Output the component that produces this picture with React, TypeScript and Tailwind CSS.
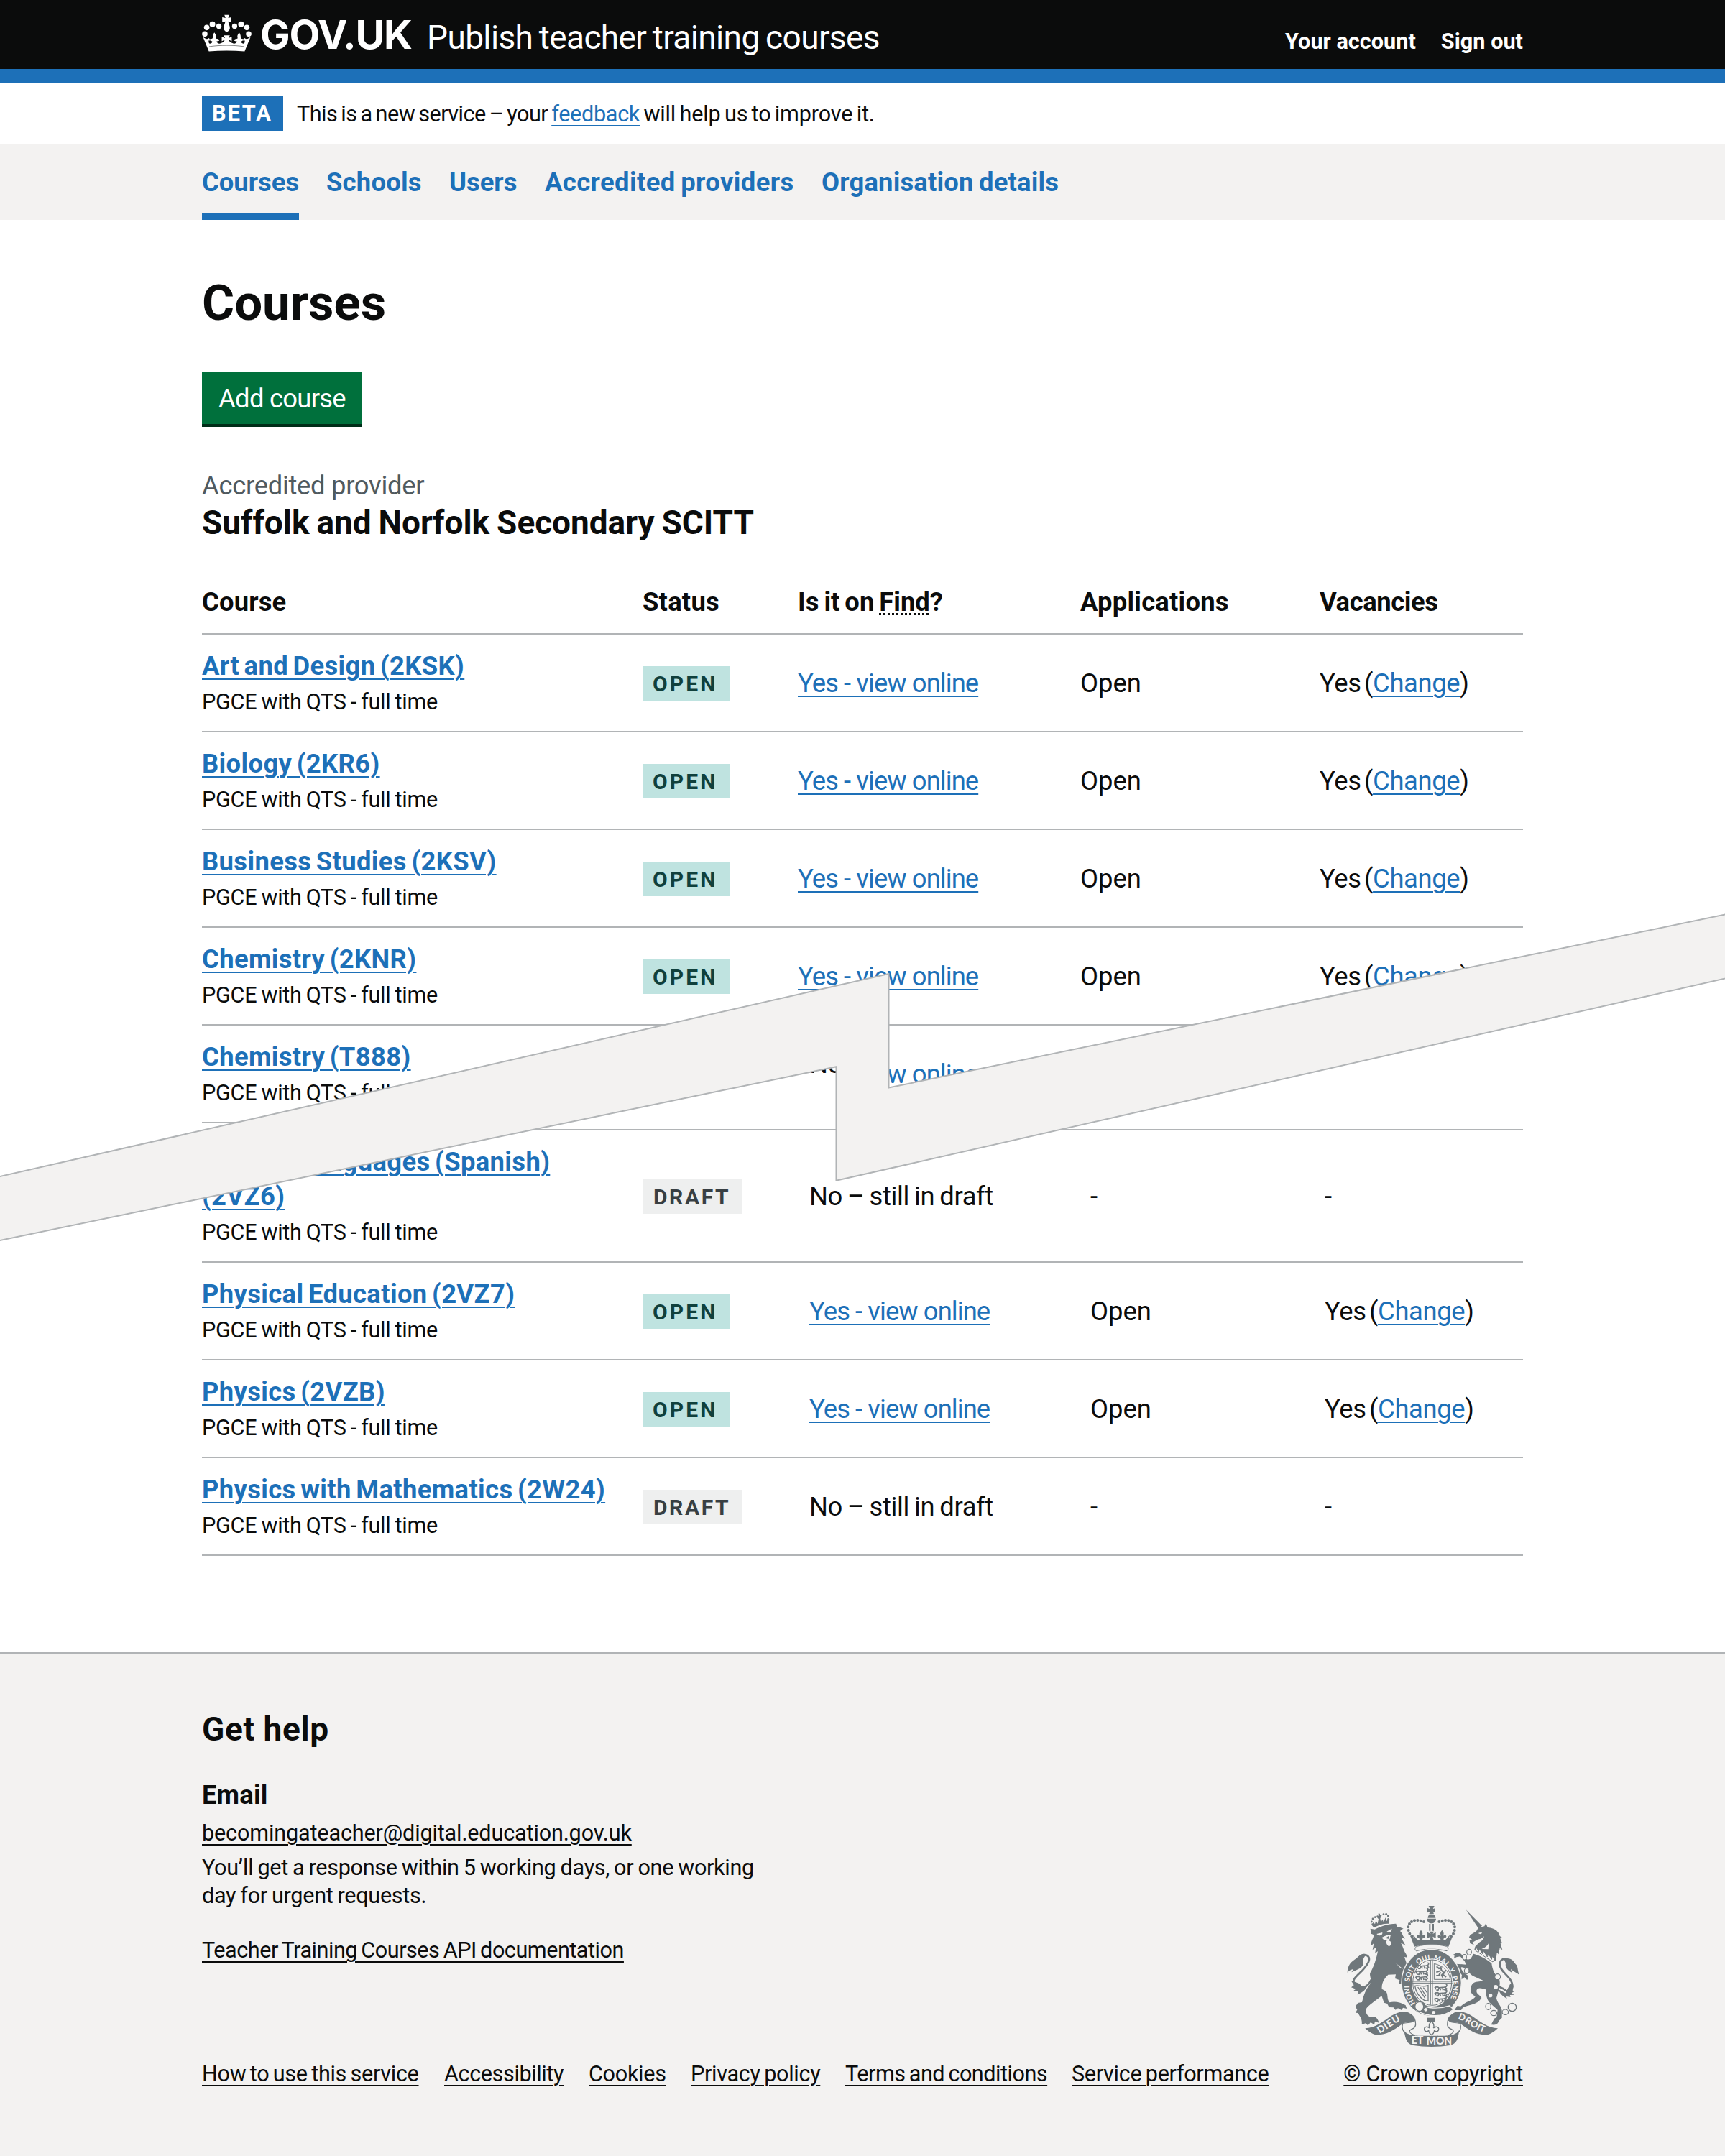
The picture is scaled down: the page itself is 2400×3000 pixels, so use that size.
import type { ReactNode } from "react";

const WRAP = "mx-auto w-[1838px]";
const UNDERLINE = "underline decoration-[2px] underline-offset-[5px]";
const LINK = "text-[#1d70b8] underline decoration-[2px] underline-offset-[5px]";

type Course = {
  title: string;
  status: "OPEN" | "DRAFT";
};

const upperCourses: Course[] = [
  { title: "Art and Design (2KSK)", status: "OPEN" },
  { title: "Biology (2KR6)", status: "OPEN" },
  { title: "Business Studies (2KSV)", status: "OPEN" },
  { title: "Chemistry (2KNR)", status: "OPEN" },
  { title: "Chemistry (T888)", status: "OPEN" },
];

const lowerCourses: Course[] = [
  { title: "Modern Languages (Spanish) (2VZ6)", status: "DRAFT" },
  { title: "Physical Education (2VZ7)", status: "OPEN" },
  { title: "Physics (2VZB)", status: "OPEN" },
  { title: "Physics with Mathematics (2W24)", status: "DRAFT" },
];

const UPPER_GRID = "grid grid-cols-[613px_216px_393px_333px_1fr]";
const LOWER_GRID = "grid grid-cols-[613px_232px_391px_326px_1fr]";

function Crown() {
  const beads: [number, number, number][] = [
    [44, 110, 11.5], [52, 83, 11.5], [76, 69, 12], [103, 77, 11],
    [228, 110, 11.5], [220, 83, 11.5], [196, 69, 12], [169, 77, 11],
  ];
  return (
    <svg className="h-[52px] w-[69px]" viewBox="32 28 208 156" fill="#fff">
      {beads.map(([x, y, r]) => (
        <circle key={`${x}-${y}`} cx={x} cy={y} r={r} />
      ))}
      <path d="M126 30H147L142 43L155 40V61L142 57C143 66 149 75 149 84C149 94 142 98 136 103C130 98 123 94 123 84C123 75 129 66 130 57L117 61V40L131 43Z" />
      <path d="M36 122C45 130 53 134 61 127L64 130C62 137 57 140 63 150C69 151 74 148 76 142L68 137C65 139 62 138 61 134C65 130 71 132 77 128C78 119 76 116 84 104C92 115 92 120 90 128C96 132 102 129 105 136C103 140 99 141 94 140C94 149 105 153 112 148C124 144 126 140 127 134L115 141V122L129 127L123 116H149L143 127L157 122V141L145 134C146 140 148 144 160 148C167 153 178 149 178 140C173 141 169 140 167 136C170 129 176 132 182 128C180 120 180 115 188 104C196 116 194 119 195 128C201 132 207 130 211 134C210 138 207 139 204 137L196 142C198 148 203 151 209 150C215 140 210 137 208 130L211 127C219 134 227 130 236 122L211 183C162 179 110 179 61 183Z" />
      <path d="M62 163C110 156 162 156 210 163" stroke="#0b0c0c" strokeWidth="1.5" fill="none" />
    </svg>
  );
}

function SmallFleur({ x, y }: { x: number; y: number }) {
  return (
    <g transform={`translate(${x} ${y})`}>
      <path d="M0-24C9-14 8-7 4 0C10-5 17-5 18 2C18 8 12 10 8 6L6 16H-6L-8 6C-12 10-18 8-18 2C-17-5-10-5-4 0C-8-7-9-14 0-24Z" />
    </g>
  );
}

function ShieldLion({ x, y }: { x: number; y: number }) {
  return (
    <path
      transform={`translate(${x} ${y})`}
      d="M0 4C5-2 9 2 13 0L20 4C29 1 36 3 44 0C53-1 53-9 47-11M44 2L51 8L45 14L38 10M33 5L35 14M18 5L15 14L7 13M22 6L25 14M3 4L5 11"
      fill="none"
      stroke="#6f777b"
      strokeWidth="5"
      strokeLinejoin="round"
    />
  );
}

function Crest() {
  const leftBeads: [number, number][] = [
    [372, 190], [362, 179], [357, 165], [356, 151], [361, 138], [370, 129], [382, 124], [395, 123], [408, 125], [421, 129],
  ];
  const lionCrown: [number, number][] = [
    [207, 140], [203, 129], [208, 117], [218, 110], [228, 107], [240, 103], [253, 98], [264, 97], [272, 105], [273, 118],
  ];
  return (
    <svg className="h-[198px] w-[241px]" viewBox="100 60 723 594" fill="#6f777b">
      {/* lion */}
      <g>
        {lionCrown.map(([x, y]) => (
          <circle key={x} cx={x} cy={y} r="4.2" />
        ))}
        <path d="M205 145L210 130L217 139L221 124L228 137L232 118L225 110L234 103L230 95H238L238 106L245 104L239 115L242 132L248 119L253 130L261 112L265 126L275 118L275 137C252 136 232 142 213 154Z" />
        <path d="M198 158L216 161C240 148 270 138 305 137L309 150C322 150 326 156 336 157L322 168C333 178 332 190 343 200L326 195L345 229L324 216C336 235 337 251 347 264L352 278L340 276L348 300L368 310L350 380L366 404L345 398L348 410L330 405L334 392L316 387L320 373L301 366L304 349L272 350C256 366 244 384 246 410L260 418C275 430 264 450 278 466C300 460 326 466 345 478L350 492L334 488L328 498L313 490L303 497L294 487L276 486L268 471L255 467L245 438C220 460 188 476 178 497C180 516 190 529 207 526C224 526 229 536 234 551L217 545L214 559L199 549L188 562L178 553L162 558C165 530 151 524 147 510L136 509L143 496L135 484L146 468L163 465C171 430 180 410 199 386C203 359 189 351 201 336C219 300 224 275 229 252L217 262L222 236L207 246L213 218L202 229C199 207 211 202 212 184L201 179Z" />
        <g fill="#f3f2f1">
          <path d="M224 180L248 174C250 186 235 192 224 180ZM266 170L287 158C289 170 280 176 266 170Z" />
          <path d="M246 195C258 188 272 182 285 183C278 190 284 199 274 207C289 212 291 225 276 232C264 224 262 214 267 206C255 207 250 202 246 195Z" />
          <path d="M304 302L335 327L320 319Z" />
        </g>
        <path d="M274 189L261 197L276 201Z" />
        <path d="M202 371C181 414 158 404 135 391C116 375 137 359 163 334C188 306 204 282 184 270C168 263 157 272 146 282" fill="none" stroke="#6f777b" strokeWidth="8" />
        <path d="M181 266C157 256 149 280 128 290C112 301 103 316 102 341C111 331 119 329 127 327L119 340C138 331 157 326 166 311C172 294 160 287 181 266Z" />
        <path d="M127 378L117 374L129 394L118 403L137 410L128 416L147 421L144 433C160 427 177 415 184 399L163 401L153 388Z" />
      </g>
      {/* unicorn */}
      <g>
        <path d="M597 79L664 146L649 157Z" />
        <path d="M649 154L674 148L680 135L687 153C721 155 735 174 738 189L747 194L740 199L748 219L741 220L749 247L738 239L733 265L726 258L722 292L711 292C685 267 660 253 632 246L635 233L648 220C656 210 671 210 672 190C660 205 644 201 639 207L623 216L631 226L614 219L612 207L622 203L610 195C611 181 633 176 641 167Z" />
        <path d="M648 177C656 173 664 173 664 177L656 181ZM693 205C696 223 680 237 662 243L690 244Z" fill="#f3f2f1" />
        <path d="M636 249L709 297L717 284L706 274L704 286L691 263L686 276L671 251L667 264L653 242L650 254L641 237Z" fill="#f3f2f1" stroke="#6f777b" strokeWidth="3" />
        <path d="M629 263C655 270 686 286 704 303C708 332 716 349 733 362C744 386 735 408 730 426L724 448C728 471 744 479 747 500V530L734 543C730 560 716 560 702 559L715 533L725 528L729 497L703 474C681 456 682 434 679 412C660 406 645 403 641 416C640 433 655 432 662 447C642 478 607 475 584 487L577 498H549L561 480L575 482C595 461 628 458 637 440C611 430 611 403 626 386C644 376 661 380 670 376C645 362 616 356 610 340C599 333 597 320 579 319C570 319 586 340 592 344L606 355L607 371L597 370L591 361L576 371L580 351C570 344 569 325 552 317L554 305L598 308L590 292L573 274L557 277L547 283L549 271L543 267L560 258L571 258L588 276L604 287L616 284Z" />
        <path d="M735 407C714 391 744 402 770 420C792 413 796 398 785 376C771 350 738 334 738 307C739 285 759 278 773 291" fill="none" stroke="#6f777b" strokeWidth="8" />
        <path d="M755 284C784 276 794 292 804 306C816 316 810 331 820 351C806 339 794 337 784 326L788 341C762 328 761 311 763 302Z" />
        <path d="M782 388L795 395C795 412 787 417 798 420L787 427L798 434L780 435L783 443L765 441L768 450C746 439 737 427 733 412L762 427Z" />
        <g fill="none" stroke="#6f777b" strokeWidth="3.5">
          <ellipse cx="610" cy="256" rx="10" ry="12" />
          <ellipse cx="591" cy="277" rx="8" ry="11" fill="#f3f2f1" />
          <ellipse cx="600" cy="334" rx="10" ry="12" fill="#f3f2f1" />
          <circle cx="729" cy="359" r="12" fill="#f3f2f1" />
          <ellipse cx="690" cy="483" rx="11" ry="13" />
          <ellipse cx="713" cy="510" rx="13" ry="11" />
          <ellipse cx="761" cy="506" rx="13" ry="11" />
          <circle cx="790" cy="486" r="17" strokeWidth="4" />
        </g>
        <circle cx="721" cy="402" r="9" fill="#f3f2f1" />
        <circle cx="699" cy="437" r="8" fill="#f3f2f1" />
      </g>
      {/* royal crown */}
      <g>
        {leftBeads.map(([x, y]) => (
          <g key={`${x}-${y}`}>
            <circle cx={x} cy={y} r="6" />
            <circle cx={906 - x} cy={y} r="6" />
          </g>
        ))}
        <path d="M441 63H465L459 76L469 72V91L459 86L463 97H443L447 86L436 91V72L447 76Z" />
        <path d="M438 113C438 102 444 98 453 98C462 98 470 102 470 113ZM434 116H472C471 129 463 136 453 136C443 136 435 129 434 116Z" />
        <path d="M443 138H449V167H443ZM457 138H463V167H457Z" />
        <path d="M436 173L450 180L444 170H464L458 180L471 173V198L458 191L461 204H445L449 191L436 198Z" />
        <SmallFleur x={409} y={188} />
        <SmallFleur x={497} y={188} />
        <path d="M364 187L380 195L376 183L393 203C418 212 436 202 453 203C470 202 488 212 513 203L530 183L526 195L542 187L524 233C481 220 428 220 382 233Z" />
        <path d="M392 232C430 222 478 222 516 232C526 236 523 247 517 251C477 241 430 241 389 251C382 247 383 235 392 232Z" fill="#f3f2f1" stroke="#6f777b" strokeWidth="3" />
      </g>
      {/* garter and shield */}
      <ellipse cx="453" cy="384" rx="125" ry="140" stroke="#f3f2f1" strokeWidth="4" />
      <ellipse cx="456" cy="383" rx="86" ry="100" fill="#f3f2f1" />
      <ellipse cx="456" cy="383" rx="81" ry="95" fill="none" stroke="#6f777b" strokeWidth="3" />
      <path d="M449 288V476M457 288V476M374 378H540M374 385H540" stroke="#6f777b" strokeWidth="3" />
      <ShieldLion x={390} y={311} />
      <ShieldLion x={386} y={335} />
      <ShieldLion x={386} y={358} />
      <ShieldLion x={466} y={401} />
      <ShieldLion x={466} y={425} />
      <ShieldLion x={464} y={449} />
      <path d="M464 304V370H531C528 346 513 316 464 304Z" fill="none" stroke="#6f777b" strokeWidth="3" />
      <path d="M474 316L484 324L492 319L494 331L506 343L499 348L514 360M489 334L473 340M491 340L484 353L473 354M494 349L500 362M507 343L512 330" fill="none" stroke="#6f777b" strokeWidth="6" />
      <path d="M384 397C400 392 416 405 439 395V460L423 457C404 445 388 426 384 397ZM396 402L426 448M407 403L430 440M419 404L434 424" fill="none" stroke="#6f777b" strokeWidth="4" />
      <defs>
        <path id="garter" d="M386 470A92 108 0 1 1 524 463" />
        <path id="dieu" d="M236 596C268 580 300 550 338 536" />
        <path id="droit" d="M562 535C600 546 635 582 678 592" />
      </defs>
      <text fill="#f3f2f1" fontFamily="Lato, sans-serif" fontSize="29" fontWeight="900" wordSpacing="6" textLength="450">
        <textPath href="#garter">HONI SOIT QUI MAL Y PENSE</textPath>
      </text>
      <path d="M390 468C412 484 465 500 528 480L545 495C500 532 435 526 390 500Z" stroke="#f3f2f1" strokeWidth="4" />
      <circle cx="404" cy="483" r="20" fill="#f3f2f1" stroke="#6f777b" strokeWidth="4" />
      <path d="M412 466C424 478 424 491 410 502" fill="none" stroke="#6f777b" strokeWidth="5" />
      <circle cx="429" cy="496" r="7" fill="#f3f2f1" />
      <circle cx="462" cy="508" r="7" fill="#f3f2f1" />
      {/* motto ribbon */}
      <path d="M436 530H469V546H436Z" />
      <path d="M453 545C466 556 464 566 461 573C470 564 484 567 483 578C482 589 470 589 465 583C463 589 465 594 453 602C441 594 443 589 441 583C436 589 424 589 423 578C422 567 436 564 445 573C442 566 440 556 453 545Z" fill="#f3f2f1" stroke="#6f777b" strokeWidth="4" />
      <path d="M176 574C217 573 254 544 285 522C316 503 344 500 364 512C387 525 392 546 382 563C370 555 360 540 331 556C293 584 266 600 228 602C208 601 192 588 176 574Z" />
      <path d="M730 574C689 573 652 544 621 522C590 503 562 500 542 512C519 525 514 546 524 563C536 555 546 540 575 556C613 584 640 600 678 602C698 601 714 588 730 574Z" />
      <path d="M333 556C325 583 343 606 384 604C352 591 358 581 378 574C390 565 389 551 381 535C380 558 346 545 333 556ZM573 556C581 583 563 606 522 604C554 591 548 581 528 574C516 565 517 551 525 535C526 558 560 545 573 556Z" fill="#f3f2f1" stroke="#6f777b" strokeWidth="3.5" />
      <path d="M338 582C354 612 403 603 453 606C503 603 552 612 568 582C565 622 556 639 530 645C482 653 424 653 376 645C350 639 345 622 338 582Z" />
      <g fill="#f3f2f1" fontFamily="Lato, sans-serif" fontWeight="900">
        <text fontSize="40" textLength="104"><textPath href="#dieu">DIEU</textPath></text>
        <text fontSize="43" x="369" y="640" textLength="50" lengthAdjust="spacingAndGlyphs">ET</text>
        <text fontSize="43" x="432" y="642" textLength="106" lengthAdjust="spacingAndGlyphs">MON</text>
        <text fontSize="38" textLength="124"><textPath href="#droit">DROIT</textPath></text>
      </g>
    </svg>
  );
}

function Tag({ status }: { status: Course["status"] }) {
  return status === "OPEN" ? (
    <strong className="mt-[2px] flex h-[48px] w-[122px] items-center bg-[#bfe3e0] pt-[2px] pl-[14px] text-[30px] leading-none font-bold tracking-[3.1px] text-[#10403c]">
      OPEN
    </strong>
  ) : (
    <strong className="mt-[2px] flex h-[48px] w-[138px] items-center bg-[#eeefef] pt-[2px] pl-[15px] text-[30px] leading-none font-bold tracking-[2.6px] text-[#383f43]">
      DRAFT
    </strong>
  );
}

function Row({ course, grid }: { course: Course; grid: string }) {
  const open = course.status === "OPEN";
  return (
    <div className={`${grid} items-center border-b-2 border-[#b1b4b6] text-[36.4px] leading-[48px]`}>
      <div className="pt-[20px] pb-[21px]">
        <a className={`${LINK} block w-fit max-w-[580px] font-bold tracking-[0.01em] [word-spacing:-0.08em]`}>{course.title}</a>
        <p className="mt-[7px] text-[30.6px] leading-[38px] tracking-[-0.01em] [word-spacing:-0.033em]">PGCE with QTS - full time</p>
      </div>
      <Tag status={course.status} />
      <div className="pt-[2px]">
        {open ? (
          <a className={`${LINK} tracking-[-0.0255em]`}>Yes - view online</a>
        ) : (
          <span className="tracking-[-0.01em] [word-spacing:-0.045em]">No – still in draft</span>
        )}
      </div>
      <div className="pt-[2px]">{open ? "Open" : "-"}</div>
      <div className="pt-[2px] tracking-[-0.01em] [word-spacing:-0.12em]">
        {open ? (
          <>
            Yes (<a className={LINK}>Change</a>)
          </>
        ) : (
          "-"
        )}
      </div>
    </div>
  );
}

function NavItem({ children, width, active }: { children: ReactNode; width: string; active?: boolean }) {
  return (
    <div className={width}>
      <a className={`block h-[105px] w-fit pt-[29px] ${active ? "border-b-[9px] border-[#1d70b8]" : ""}`}>{children}</a>
    </div>
  );
}

export default function App() {
  return (
    <div className="relative h-[3000px] w-[2400px] overflow-hidden bg-white font-['Roboto',sans-serif] text-[#0b0c0c]">
      <header className="border-b-[19px] border-[#1d70b8] bg-[#0b0c0c] text-white">
        <div className={`${WRAP} flex h-[96px] items-start`}>
          <div className="mt-[20px]">
            <Crown />
          </div>
          <span className="mt-[18px] ml-[12px] w-[232px] font-['Inter',sans-serif] text-[55.5px] leading-[60px] font-bold tracking-[-0.02em]">GOV.UK</span>
          <span className="mt-[24px] text-[46px] leading-[57px] tracking-[-0.0135em] [word-spacing:-0.05em]">Publish teacher training courses</span>
          <nav className="mt-[39px] ml-auto flex gap-[35px] text-[30.6px] leading-[38px] font-bold">
            <a className="tracking-[0.001em]">Your account</a>
            <a className="tracking-[0.001em]">Sign out</a>
          </nav>
        </div>
      </header>

      <div className={`${WRAP} flex h-[86px] pt-[19px]`}>
        <strong className="flex h-[48px] w-[113px] items-center bg-[#1d70b8] pt-[1px] pl-[14px] text-[30.6px] leading-none font-bold tracking-[2.3px] text-white">BETA</strong>
        <p className="mt-[6px] ml-[19px] text-[30.6px] leading-[38px] tracking-[-0.005em] [word-spacing:-0.068em]">
          <span className="tracking-[-0.0167em]">This is a new service – your </span>
          <a className={`${LINK} tracking-[-0.01em]`}>feedback</a> will help us to improve it.
        </p>
      </div>

      <nav className="bg-[#f3f2f1] text-[36.4px] leading-[48px] font-bold text-[#1d70b8]">
        <div className={`${WRAP} flex`}>
          <NavItem width="w-[173px]" active>Courses</NavItem>
          <NavItem width="w-[171px] tracking-[0.006em]">Schools</NavItem>
          <NavItem width="w-[133px]">Users</NavItem>
          <NavItem width="w-[385px] tracking-[0.011em] [word-spacing:-0.05em]">Accredited providers</NavItem>
          <NavItem width="w-[360px] tracking-[0.005em] [word-spacing:-0.05em]">Organisation details</NavItem>
        </div>
      </nav>

      <main>
        <div className="[clip-path:polygon(0_0,2400px_0,2400px_1000px,1200px_1250px,1200px_1110px,0_1380px)]">
          <div className={`${WRAP} pt-[77px]`}>
            <h1 className="text-[69px] leading-[77px] font-bold">Courses</h1>
            <button className="mt-[57px] flex h-[77px] w-[223px] items-center justify-center border-b-4 border-[#002d18] bg-[#00703c] pt-[3px] text-[36.4px] leading-none tracking-[-0.02em] text-white">
              Add course
            </button>
            <p className="mt-[58px] text-[36.4px] leading-[48px] tracking-[-0.008em] text-[#505a5f]">Accredited provider</p>
            <h2 className="-mt-px text-[46px] leading-[57px] font-bold tracking-[-0.001em] [word-spacing:-0.03em]">Suffolk and Norfolk Secondary SCITT</h2>
            <div className={`${UPPER_GRID} mt-[38px] border-b-2 border-[#b1b4b6] pt-[20px] pb-[19px] text-[36.4px] leading-[48px] font-bold`}>
              <span className="tracking-[0.004em]">Course</span>
              <span className="tracking-[0.006em]">Status</span>
              <span className="[word-spacing:-0.055em]">
                Is it on <abbr className="underline decoration-dotted decoration-[3px] underline-offset-[3px] [text-decoration-skip-ink:none]">Find</abbr>?
              </span>
              <span className="tracking-[0.006em]">Applications</span>
              <span className="tracking-[-0.011em]">Vacancies</span>
            </div>
            {upperCourses.map((c) => (
              <Row key={c.title} course={c} grid={UPPER_GRID} />
            ))}
          </div>
        </div>

        <div className="-mt-[174px] [clip-path:polygon(0_290px,1200px_20px,1200px_180px,2400px_-70px,2400px_900px,0_900px)]">
          <div className={WRAP}>
            <div className={`${LOWER_GRID} h-[184px] items-center border-b-2 border-[#b1b4b6] text-[36.4px] leading-[48px]`}>
              <span className="col-start-3 pt-[2px] tracking-[-0.01em] [word-spacing:-0.045em]">No – still in draft</span>
            </div>
            {lowerCourses.map((c) => (
              <Row key={c.title} course={c} grid={LOWER_GRID} />
            ))}
          </div>
        </div>
      </main>

      <svg className="absolute top-0 left-0" width="2400" height="3000" viewBox="0 0 2400 3000">
        <path
          d="M-10 1639.3L1236.5 1355V1513.5L2410 1270.5V1359.2L1163.5 1642.8V1484.3L-10 1728Z"
          fill="#f3f2f1"
          stroke="#b1b4b6"
          strokeWidth="2"
        />
      </svg>

      <footer className="mt-[134px] h-[701px] border-t-2 border-[#b1b4b6] bg-[#f3f2f1]">
        <div className={`${WRAP} flex items-end justify-between pt-[77px] text-[30.6px] leading-[38px]`}>
          <div>
            <h2 className="text-[46px] leading-[57px] font-bold tracking-[0.013em]">Get help</h2>
            <h3 className="mt-[39px] text-[36.4px] leading-[48px] font-bold tracking-[0.004em]">Email</h3>
            <p className="mt-[10px] tracking-[-0.005em]">
              <a className={UNDERLINE}>becomingateacher@digital.education.gov.uk</a>
            </p>
            <p className="mt-[10px] w-[800px] leading-[38.5px] tracking-[-0.01em] [word-spacing:-0.038em]">
              You’ll get a response within 5 working days, or one working
              <br />
              day for urgent requests.
            </p>
            <p className="mt-[38px] tracking-[-0.0155em] [word-spacing:-0.06em]">
              <a className={UNDERLINE}>Teacher Training Courses API documentation</a>
            </p>
            <div className="mt-[134px] flex tracking-[-0.01em] [word-spacing:-0.06em]">
              <span className="w-[337px]"><a className={UNDERLINE}>How to use this service</a></span>
              <span className="w-[201px] tracking-[-0.013em]"><a className={UNDERLINE}>Accessibility</a></span>
              <span className="w-[142px]"><a className={UNDERLINE}>Cookies</a></span>
              <span className="w-[215px]"><a className={UNDERLINE}>Privacy policy</a></span>
              <span className="w-[315px] tracking-[-0.016em]"><a className={UNDERLINE}>Terms and conditions</a></span>
              <span><a className={UNDERLINE}>Service performance</a></span>
            </div>
          </div>
          <div className="flex flex-col items-end">
            <div className="mr-[4px] mb-[18px]">
              <Crest />
            </div>
            <a className={`${UNDERLINE} tracking-[-0.007em]`}>© Crown copyright</a>
          </div>
        </div>
      </footer>
    </div>
  );
}
